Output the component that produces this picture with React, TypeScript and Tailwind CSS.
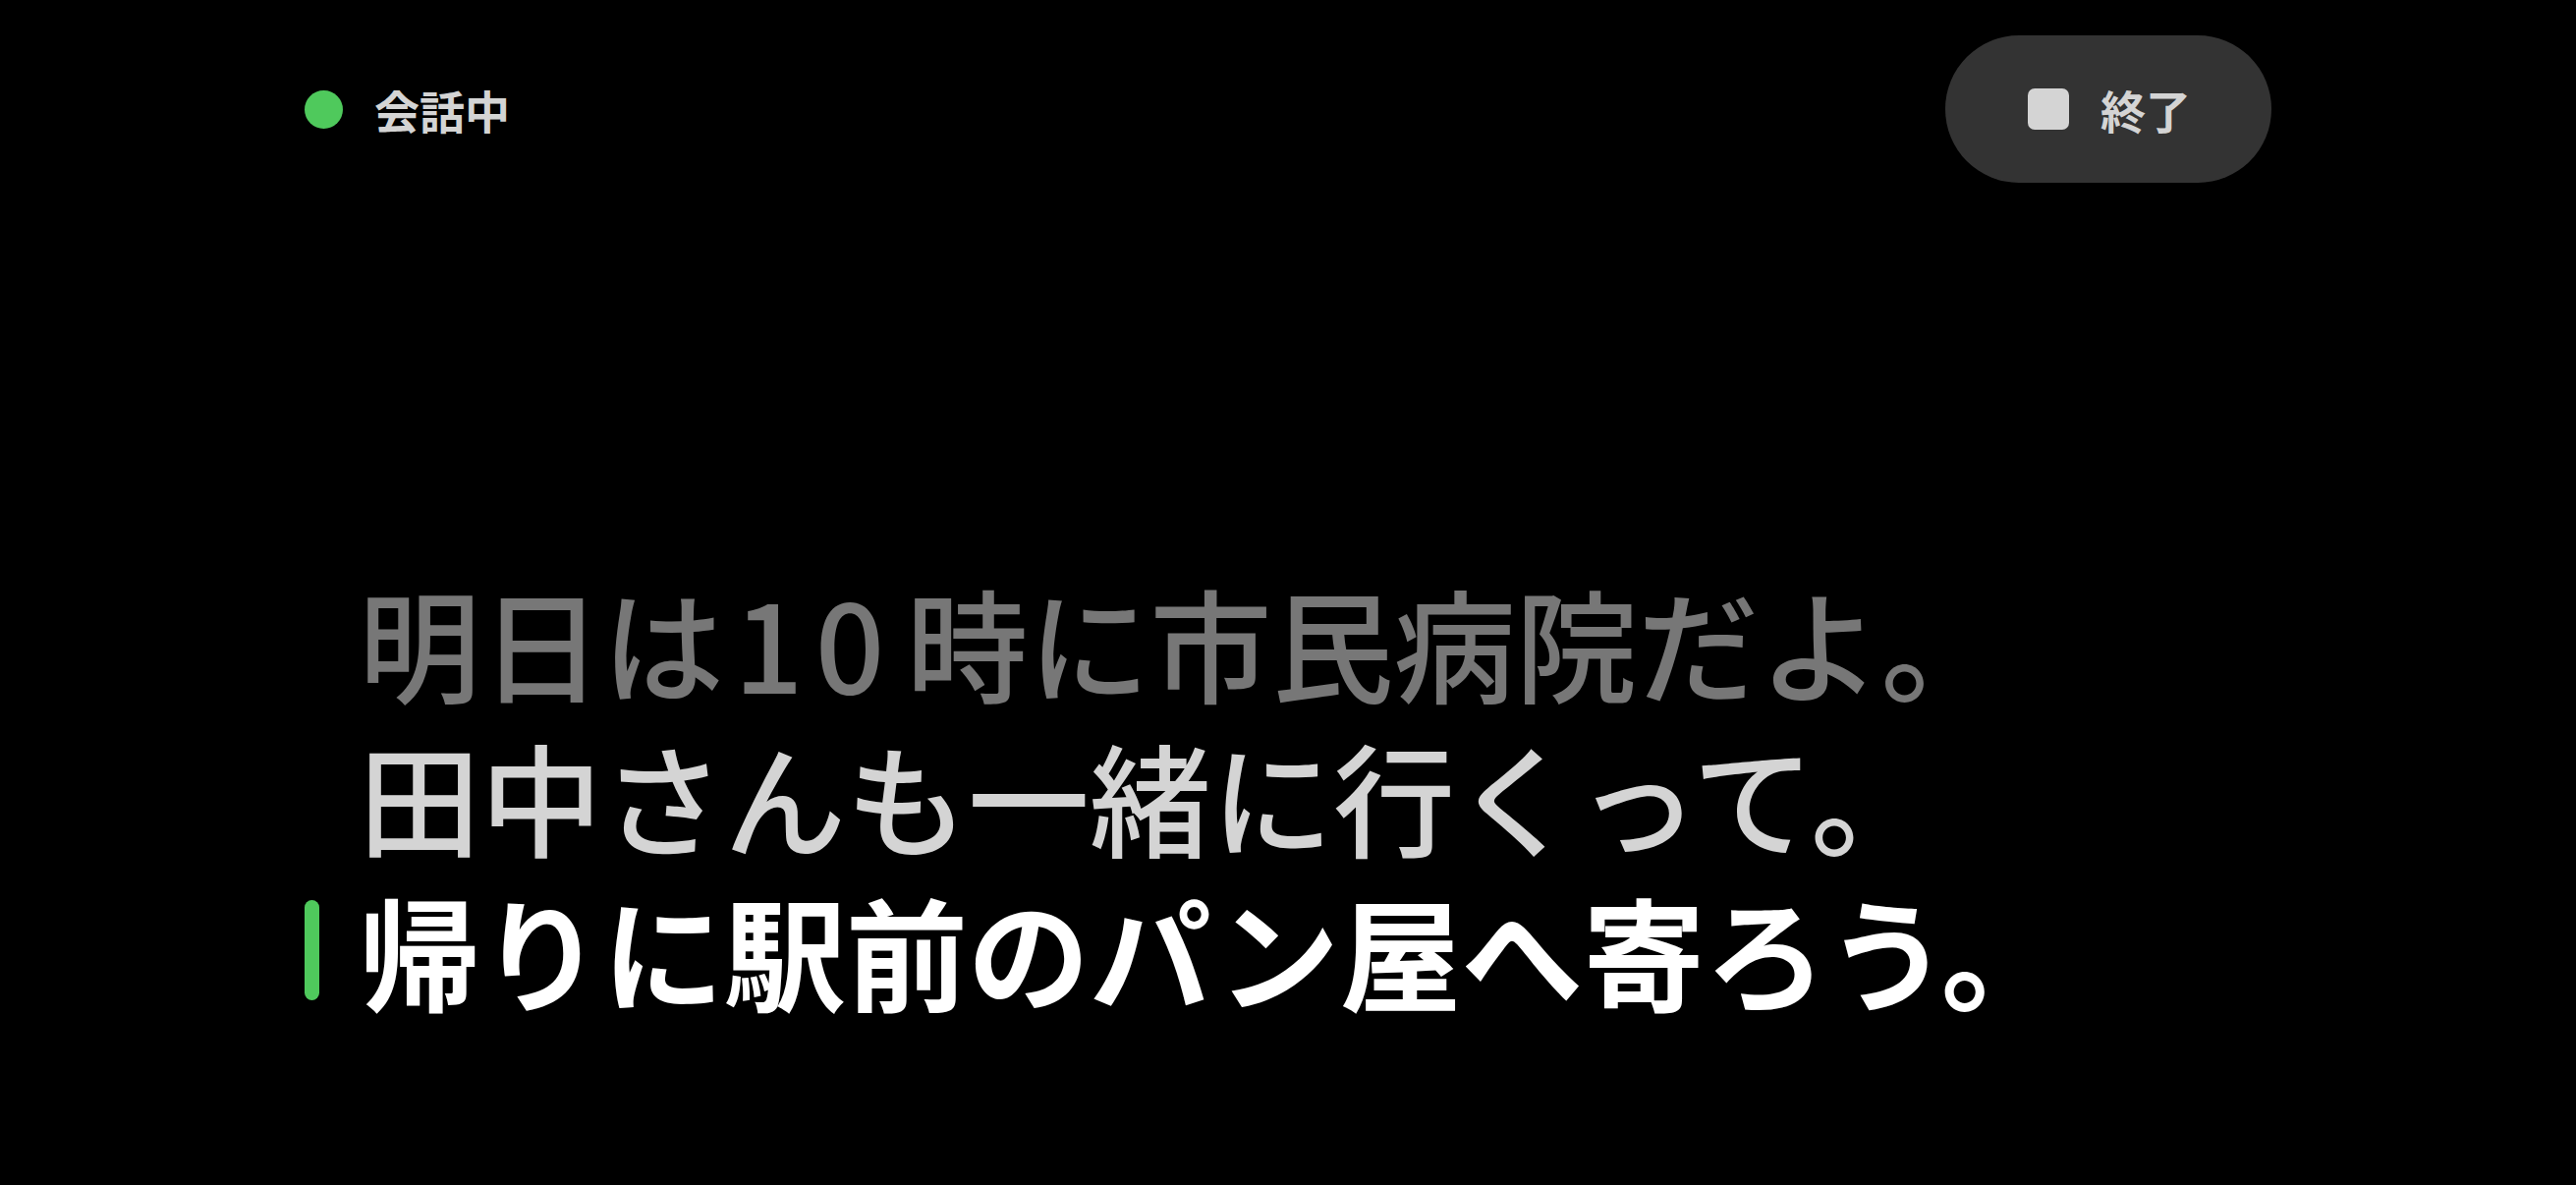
export default function App() {
  return (
    <div className="flex h-screen w-full flex-col bg-black font-['Noto_Sans_CJK_JP','Noto_Sans',sans-serif]">
      <header className="flex items-center justify-between px-[310px] pt-[36px]">
        <div className="flex items-center gap-[32px]">
          <span className="h-[39px] w-[39px] rounded-full bg-[#4fc95c]" />
          <span className="text-[46px] font-bold leading-none text-[#d4d4d4]">会話中</span>
        </div>
        <button className="flex h-[150px] items-center gap-[32px] rounded-full bg-[#333333] pl-[84px] pr-[82px]">
          <span className="h-[42px] w-[42px] rounded-[7px] bg-[#d4d4d4]" />
          <span className="text-[46px] font-bold leading-none text-[#d4d4d4]">終了</span>
        </button>
      </header>

      <main className="flex flex-1 flex-col justify-end pb-[161px] pl-[310px]">
        <div className="flex items-center gap-[40px]">
          <span className="w-[15px]" />
          <p className="text-[124px] font-medium leading-[157px] text-[#777777]">
            明日は<span className="mx-[10px] tracking-[12px]">10</span>時に市民病院だよ。
          </p>
        </div>
        <div className="flex items-center gap-[40px]">
          <span className="w-[15px]" />
          <p className="text-[124px] font-medium leading-[157px] text-[#d4d4d4]">田中さんも一緒に行くって。</p>
        </div>
        <div className="flex items-center gap-[40px]">
          <span className="h-[102px] w-[15px] rounded-full bg-[#4fc95c]" />
          <p className="text-[124px] font-bold leading-[157px] text-white">帰りに駅前のパン屋へ寄ろう。</p>
        </div>
      </main>
    </div>
  );
}
